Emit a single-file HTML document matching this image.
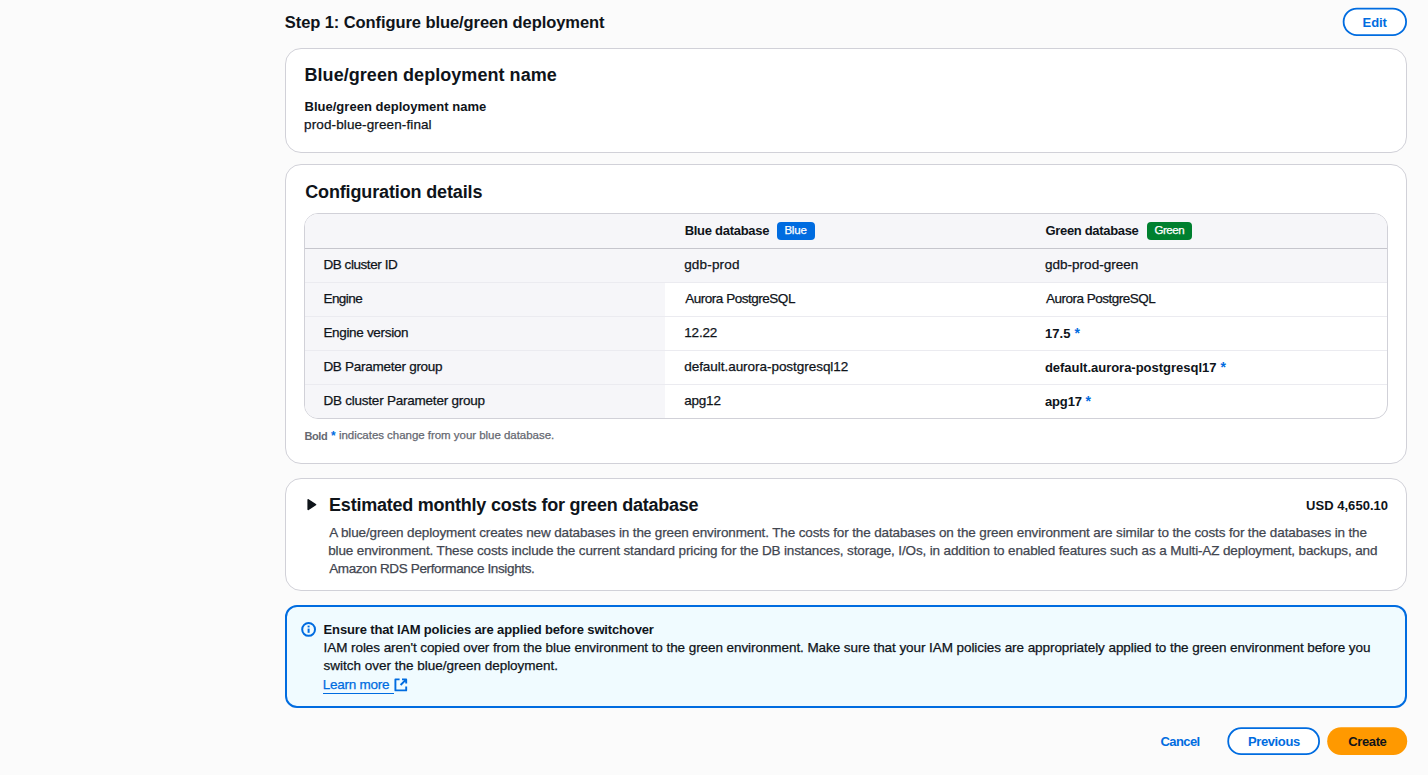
<!DOCTYPE html>
<html>
<head>
<meta charset="utf-8">
<style>
html,body{margin:0;padding:0;}
body{width:1428px;height:775px;overflow:hidden;background:#fbfbfb;font-family:"Liberation Sans",sans-serif;color:#0f141a;position:relative;}
.a{position:absolute;box-sizing:border-box;}
.t{position:absolute;white-space:nowrap;line-height:1;}
.card{position:absolute;box-sizing:border-box;left:285px;width:1122px;background:#fff;border:1px solid #d1d1d8;border-radius:16px;}
</style>
</head>
<body>
<!-- Edit button -->
<svg class="a" style="left:1342px;top:7px;" width="66" height="30" viewBox="0 0 66 30"><rect x="1.6" y="1.6" width="62.5" height="26.5" rx="13.25" fill="#fff" stroke="#006ce0" stroke-width="1.8"/></svg>

<!-- card 1 -->
<div class="card" style="top:48px;height:105px;"></div>

<!-- card 2 -->
<div class="card" style="top:164px;height:300px;"></div>
<div class="a" style="left:304px;top:213px;width:1084px;height:206px;border:1px solid #d1d1d8;border-radius:14px;overflow:hidden;background:#fff;">
  <div class="a" style="left:0;top:0;width:1082px;height:69px;background:#f6f6f9;"></div>
  <div class="a" style="left:0;top:0;width:360px;height:204px;background:#f6f6f9;"></div>
  <div class="a" style="left:0;top:34px;width:1082px;height:1px;background:#c6c6cd;"></div>
  <div class="a" style="left:0;top:68px;width:1082px;height:1px;background:#ebebf0;"></div>
  <div class="a" style="left:0;top:102px;width:1082px;height:1px;background:#ebebf0;"></div>
  <div class="a" style="left:0;top:136px;width:1082px;height:1px;background:#ebebf0;"></div>
  <div class="a" style="left:0;top:170px;width:1082px;height:1px;background:#ebebf0;"></div>
</div>
<div class="a" style="left:777px;top:222px;width:38px;height:18px;background:#006ce0;border-radius:4px;"></div>
<div class="a" style="left:1147px;top:222px;width:45px;height:18px;background:#00802f;border-radius:4px;"></div>

<!-- card 3 -->
<div class="card" style="top:478px;height:113px;"></div>
<svg class="a" style="left:304px;top:496px;" width="16" height="18" viewBox="0 0 16 18"><path d="M4.2 3.8 L11.5 8.6 L4.2 13.4 Z" fill="#0f141a" stroke="#0f141a" stroke-width="1.6" stroke-linejoin="round"/></svg>

<!-- alert -->
<div class="a" style="left:285px;top:605px;width:1122px;height:103px;border:2px solid #006ce0;background:#f0fbff;border-radius:12px;"></div>
<svg class="a" style="left:300px;top:621px;" width="17" height="17" viewBox="0 0 17 17"><circle cx="8.6" cy="8.4" r="6.4" fill="none" stroke="#006ce0" stroke-width="2"/><rect x="7.6" y="7.6" width="2" height="4.2" fill="#006ce0"/><rect x="7.6" y="4.6" width="2" height="1.8" fill="#006ce0"/></svg>
<div class="a" style="left:323px;top:693px;width:71px;height:1px;background:#006ce0;"></div>
<svg class="a" style="left:393px;top:677px;" width="16" height="16" viewBox="0 0 16 16"><path d="M6.6 2.4 H2.4 V13.4 H13.2 V9.4" fill="none" stroke="#006ce0" stroke-width="1.9" stroke-linejoin="round"/><path d="M9 2.4 H13.2 V6.6 M13 2.6 L7.6 8" fill="none" stroke="#006ce0" stroke-width="1.9" stroke-linejoin="round"/></svg>

<!-- footer buttons -->
<svg class="a" style="left:1227px;top:727px;" width="95" height="30" viewBox="0 0 95 30"><rect x="1.2" y="1.2" width="90.9" height="25.9" rx="12.95" fill="#fff" stroke="#006ce0" stroke-width="1.8"/></svg>
<svg class="a" style="left:1327px;top:727px;" width="82" height="30" viewBox="0 0 82 30"><rect x="0.2" y="0.3" width="80" height="27.7" rx="13.85" fill="#ff9900"/></svg>

<div id="step" class="t" style="left:284.80px;top:13.83px;font-size:16.5px;font-weight:700;color:#0f141a;letter-spacing:-0.079px">Step 1: Configure blue/green deployment</div>
<div id="edit" class="t" style="left:1362.60px;top:15.70px;font-size:13px;font-weight:700;color:#006ce0;letter-spacing:-0.133px">Edit</div>
<div id="h1" class="t" style="left:304.50px;top:66.06px;font-size:18px;font-weight:700;color:#0f141a;letter-spacing:0.048px">Blue/green deployment name</div>
<div id="lab" class="t" style="left:304.50px;top:99.70px;font-size:13px;font-weight:700;color:#0f141a;letter-spacing:0.016px">Blue/green deployment name</div>
<div id="val" class="t" style="left:304.10px;top:117.57px;font-size:13.5px;font-weight:400;color:#0f141a;letter-spacing:0.110px;-webkit-text-stroke:0.25px #0f141a">prod-blue-green-final</div>
<div id="h2" class="t" style="left:305.20px;top:182.76px;font-size:18px;font-weight:700;color:#0f141a;letter-spacing:-0.140px">Configuration details</div>
<div id="bdb" class="t" style="left:684.70px;top:223.90px;font-size:13px;font-weight:700;color:#0f141a;letter-spacing:-0.283px">Blue database</div>
<div id="bbadge" class="t" style="left:784.40px;top:224.87px;font-size:11.5px;font-weight:400;color:#ffffff;letter-spacing:-0.200px;-webkit-text-stroke:0.25px #ffffff">Blue</div>
<div id="gdb" class="t" style="left:1045.50px;top:223.90px;font-size:13px;font-weight:700;color:#0f141a;letter-spacing:-0.323px">Green database</div>
<div id="gbadge" class="t" style="left:1154.40px;top:224.87px;font-size:11.5px;font-weight:400;color:#ffffff;letter-spacing:-0.450px;-webkit-text-stroke:0.25px #ffffff">Green</div>
<div id="r1a" class="t" style="left:323.40px;top:258.27px;font-size:13.5px;font-weight:400;color:#0f141a;letter-spacing:-0.433px;-webkit-text-stroke:0.25px #0f141a">DB cluster ID</div>
<div id="r1b" class="t" style="left:684.20px;top:258.27px;font-size:13.5px;font-weight:400;color:#0f141a;letter-spacing:0.171px;-webkit-text-stroke:0.25px #0f141a">gdb-prod</div>
<div id="r1c" class="t" style="left:1044.90px;top:258.27px;font-size:13.5px;font-weight:400;color:#0f141a;letter-spacing:0.031px;-webkit-text-stroke:0.25px #0f141a">gdb-prod-green</div>
<div id="r2a" class="t" style="left:323.40px;top:292.27px;font-size:13.5px;font-weight:400;color:#0f141a;letter-spacing:-0.520px;-webkit-text-stroke:0.25px #0f141a">Engine</div>
<div id="r2b" class="t" style="left:685.20px;top:292.27px;font-size:13.5px;font-weight:400;color:#0f141a;letter-spacing:-0.475px;-webkit-text-stroke:0.25px #0f141a">Aurora PostgreSQL</div>
<div id="r2c" class="t" style="left:1045.90px;top:292.27px;font-size:13.5px;font-weight:400;color:#0f141a;letter-spacing:-0.500px;-webkit-text-stroke:0.25px #0f141a">Aurora PostgreSQL</div>
<div id="r3a" class="t" style="left:323.40px;top:326.27px;font-size:13.5px;font-weight:400;color:#0f141a;letter-spacing:-0.323px;-webkit-text-stroke:0.25px #0f141a">Engine version</div>
<div id="r3b" class="t" style="left:684.20px;top:326.27px;font-size:13.5px;font-weight:400;color:#0f141a;letter-spacing:-0.150px;-webkit-text-stroke:0.25px #0f141a">12.22</div>
<div id="r3c" class="t" style="left:1044.90px;top:326.70px;font-size:13px;font-weight:700;color:#0f141a;letter-spacing:0.133px">17.5</div>
<div id="r4a" class="t" style="left:323.40px;top:360.27px;font-size:13.5px;font-weight:400;color:#0f141a;letter-spacing:-0.271px;-webkit-text-stroke:0.25px #0f141a">DB Parameter group</div>
<div id="r4b" class="t" style="left:684.20px;top:360.27px;font-size:13.5px;font-weight:400;color:#0f141a;letter-spacing:-0.038px;-webkit-text-stroke:0.25px #0f141a">default.aurora-postgresql12</div>
<div id="r4c" class="t" style="left:1044.90px;top:360.70px;font-size:13px;font-weight:700;color:#0f141a;letter-spacing:-0.015px">default.aurora-postgresql17</div>
<div id="r5a" class="t" style="left:323.40px;top:394.27px;font-size:13.5px;font-weight:400;color:#0f141a;letter-spacing:-0.224px;-webkit-text-stroke:0.25px #0f141a">DB cluster Parameter group</div>
<div id="r5b" class="t" style="left:684.20px;top:394.27px;font-size:13.5px;font-weight:400;color:#0f141a;letter-spacing:-0.200px;-webkit-text-stroke:0.25px #0f141a">apg12</div>
<div id="r5c" class="t" style="left:1044.90px;top:394.70px;font-size:13px;font-weight:700;color:#0f141a;letter-spacing:-0.100px">apg17</div>
<div id="fn1" class="t" style="left:304.40px;top:430.79px;font-size:11px;font-weight:700;color:#656871;letter-spacing:-0.400px">Bold</div>
<div id="fn2" class="t" style="left:338.90px;top:430.37px;font-size:11.5px;font-weight:400;color:#656871;letter-spacing:-0.035px;-webkit-text-stroke:0.25px #656871">indicates change from your blue database.</div>
<div id="cost" class="t" style="left:329.10px;top:496.46px;font-size:18px;font-weight:700;color:#0f141a;letter-spacing:-0.234px">Estimated monthly costs for green database</div>
<div id="usd" class="t" style="left:1306.00px;top:498.60px;font-size:13px;font-weight:700;color:#0f141a;letter-spacing:0.036px">USD 4,650.10</div>
<div id="p1" class="t" style="left:329.20px;top:525.57px;font-size:13.5px;font-weight:400;color:#424650;letter-spacing:-0.129px;-webkit-text-stroke:0.25px #424650">A blue/green deployment creates new databases in the green environment. The costs for the databases on the green environment are similar to the costs for the databases in the</div>
<div id="p2" class="t" style="left:328.20px;top:544.27px;font-size:13.5px;font-weight:400;color:#424650;letter-spacing:-0.137px;-webkit-text-stroke:0.25px #424650">blue environment. These costs include the current standard pricing for the DB instances, storage, I/Os, in addition to enabled features such as a Multi-AZ deployment, backups, and</div>
<div id="p3" class="t" style="left:329.20px;top:562.37px;font-size:13.5px;font-weight:400;color:#424650;letter-spacing:-0.361px;-webkit-text-stroke:0.25px #424650">Amazon RDS Performance Insights.</div>
<div id="at" class="t" style="left:323.60px;top:622.80px;font-size:13px;font-weight:700;color:#0f141a;letter-spacing:-0.147px">Ensure that IAM policies are applied before switchover</div>
<div id="a1" class="t" style="left:323.60px;top:640.97px;font-size:13.5px;font-weight:400;color:#0f141a;letter-spacing:-0.071px;-webkit-text-stroke:0.25px #0f141a">IAM roles aren't copied over from the blue environment to the green environment. Make sure that your IAM policies are appropriately applied to the green environment before you</div>
<div id="a2" class="t" style="left:323.60px;top:659.07px;font-size:13.5px;font-weight:400;color:#0f141a;letter-spacing:-0.011px;-webkit-text-stroke:0.25px #0f141a">switch over the blue/green deployment.</div>
<div id="lm" class="t" style="left:322.75px;top:677.57px;font-size:13.5px;font-weight:400;color:#006ce0;letter-spacing:-0.244px;-webkit-text-stroke:0.25px #006ce0">Learn more</div>
<div id="cancel" class="t" style="left:1160.40px;top:734.90px;font-size:13px;font-weight:700;color:#006ce0;letter-spacing:-0.560px">Cancel</div>
<div id="prev" class="t" style="left:1247.90px;top:734.90px;font-size:13px;font-weight:700;color:#006ce0;letter-spacing:-0.371px">Previous</div>
<div id="create" class="t" style="left:1348.20px;top:734.90px;font-size:13px;font-weight:700;color:#0f141a;letter-spacing:-0.360px">Create</div>
<!-- stars -->
<div class="t" style="left:1074.5px;top:326px;font-size:14px;font-weight:700;color:#006ce0;">*</div>
<div class="t" style="left:1220.6px;top:360px;font-size:14px;font-weight:700;color:#006ce0;">*</div>
<div class="t" style="left:1085.6px;top:394px;font-size:14px;font-weight:700;color:#006ce0;">*</div>
<div class="t" style="left:331px;top:430px;font-size:12px;font-weight:700;color:#006ce0;">*</div>
</body>
</html>
